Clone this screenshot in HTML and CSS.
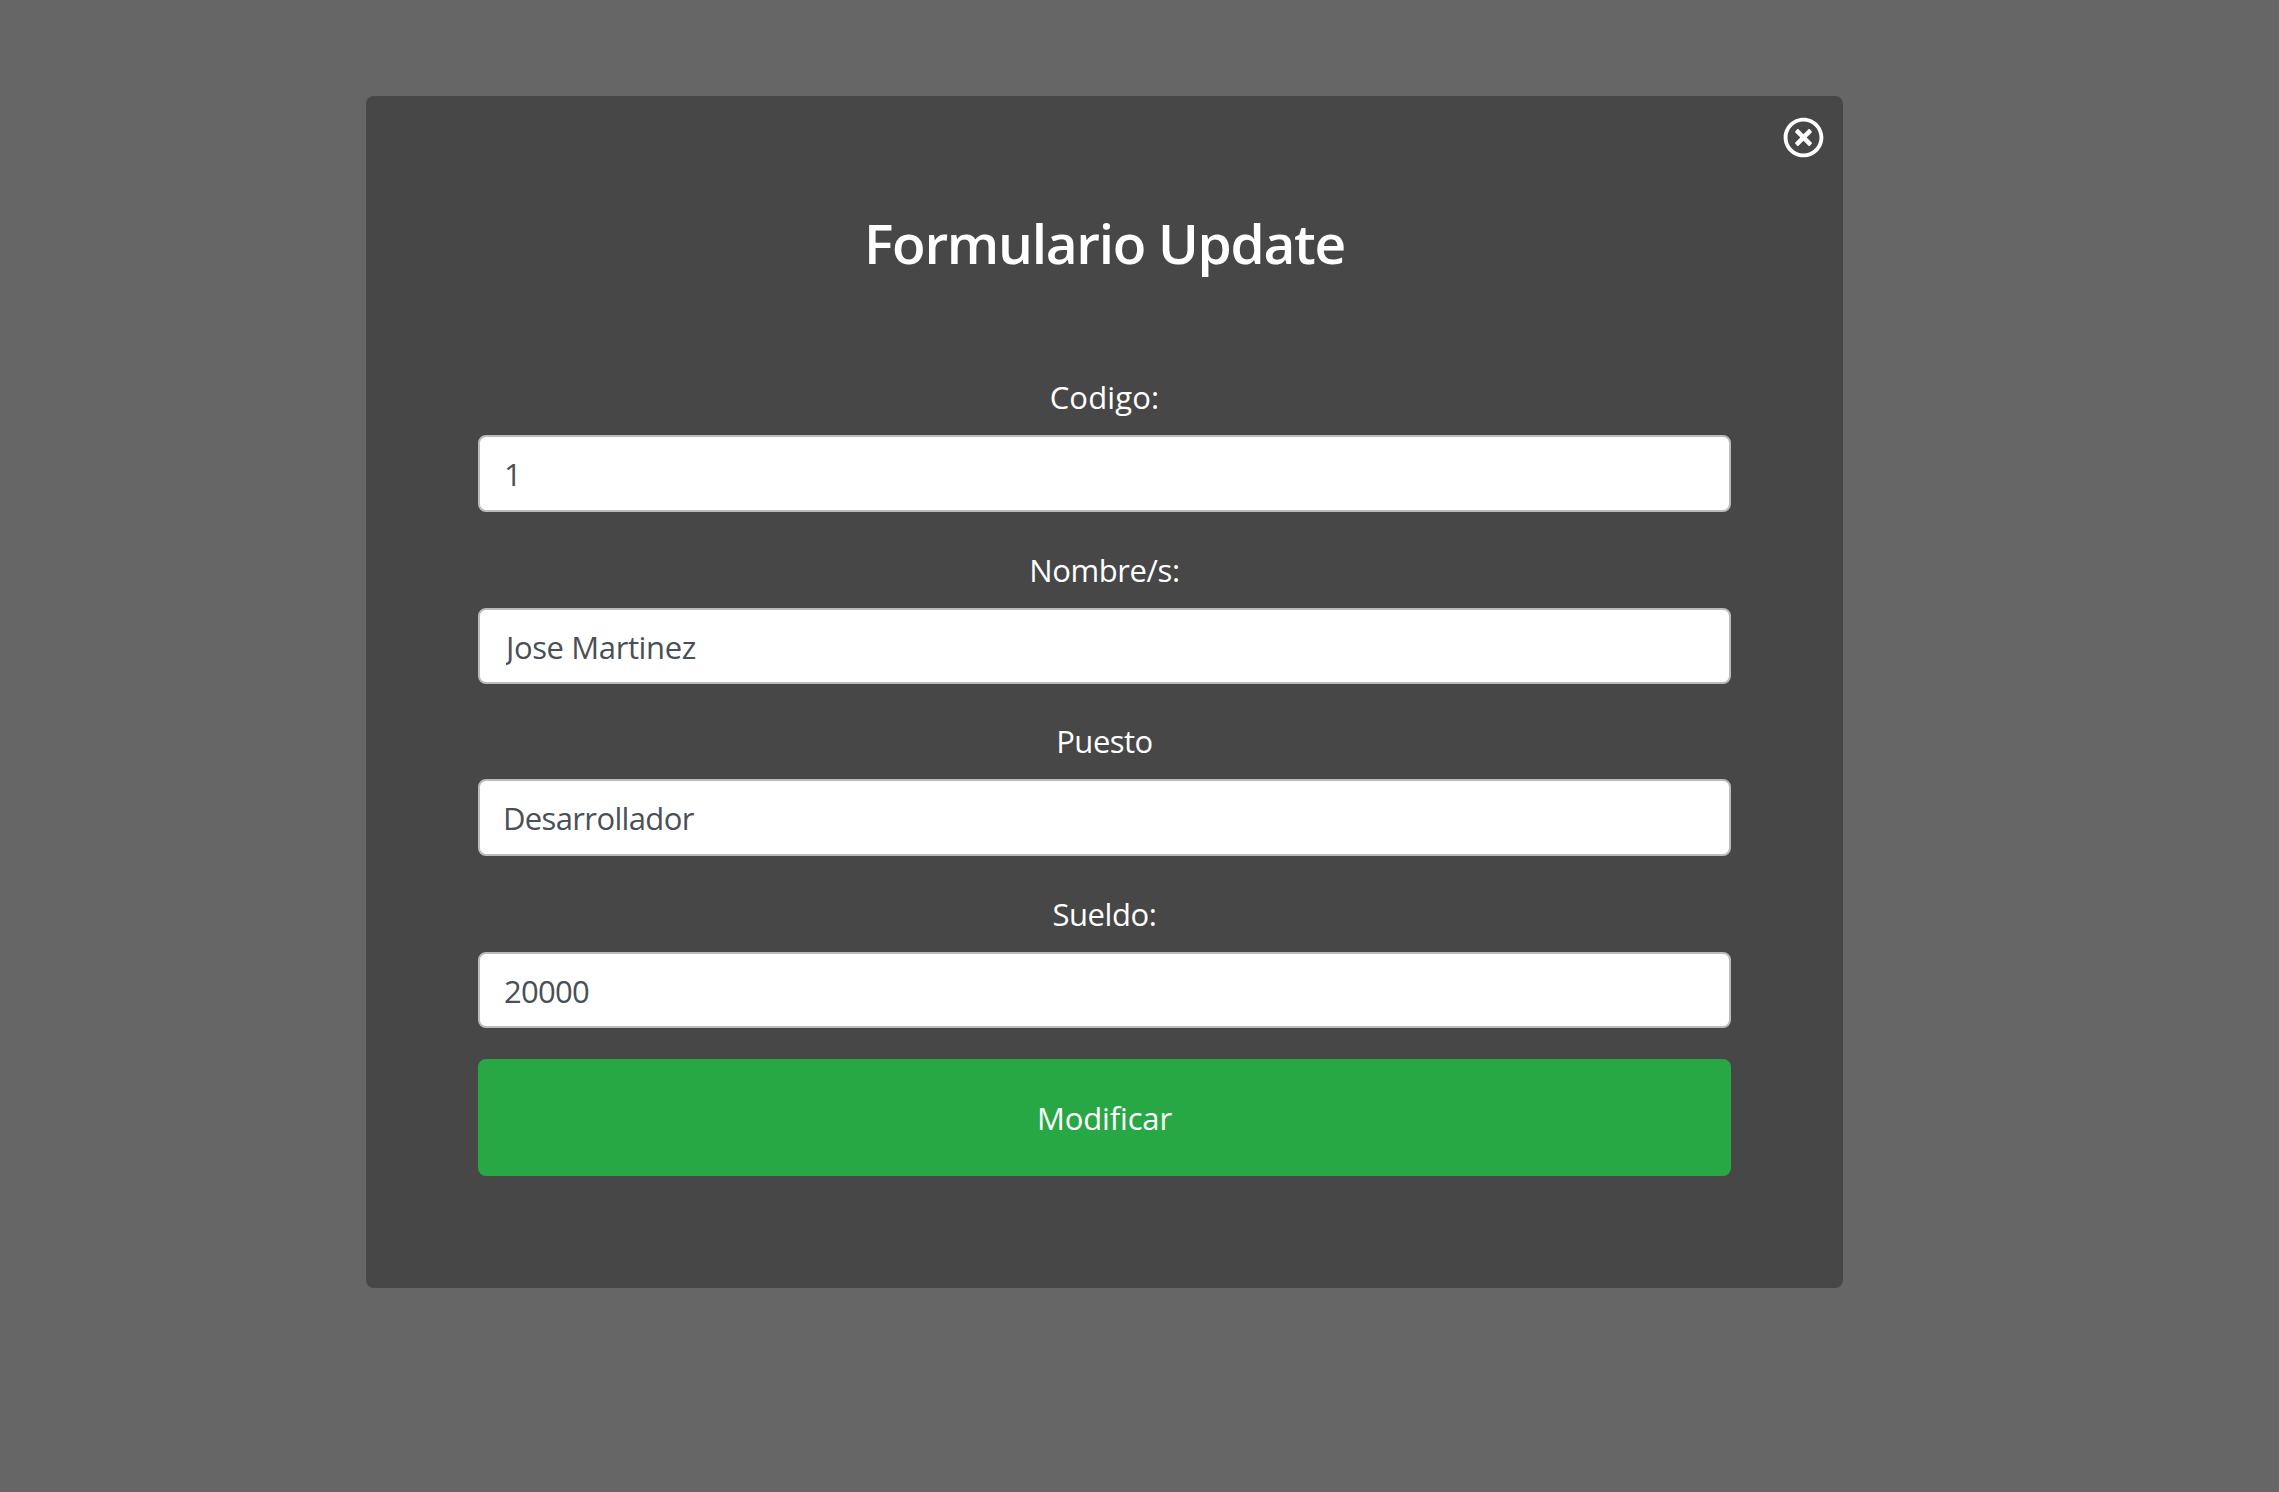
FILE: index.html
```html
<!DOCTYPE html>
<html lang="es">
<head>
<meta charset="utf-8">
<title>Formulario Update</title>
<link rel="stylesheet" href="styles.css">
</head>
<body>
<main class="modal">
  <header class="modal-top">
    <button class="close" type="button" aria-label="Cerrar">
      <svg viewBox="0 0 512 512" width="41" height="41"><path fill="currentColor" d="M256 8C119 8 8 119 8 256s111 248 248 248 248-111 248-248S393 8 256 8zm0 448c-110.500 0-200-89.500-200-200S145.500 56 256 56s200 89.500 200 200-89.500 200-200 200zm101.800-262.200L295.600 256l62.200 62.200c4.700 4.700 4.700 12.300 0 17l-22.600 22.600c-4.700 4.700-12.300 4.700-17 0L256 295.600l-62.200 62.200c-4.700 4.700-12.300 4.700-17 0l-22.600-22.600c-4.700-4.700-4.700-12.300 0-17l62.200-62.200-62.200-62.200c-4.700-4.700-4.700-12.300 0-17l22.600-22.600c4.700-4.700 12.300-4.700 17 0l62.200 62.200 62.200-62.200c4.700-4.700 12.300-4.700 17 0l22.600 22.600c4.700 4.700 4.700 12.300 0 17z"/></svg>
    </button>
  </header>
  <h1 class="title">Formulario Update</h1>
  <form class="form">
    <div class="field"><label class="label label-codigo" for="codigo">Codigo:</label><input class="input input-codigo" id="codigo" type="text" value="1"></div>
    <div class="field"><label class="label label-nombre" for="nombre">Nombre/s:</label><input class="input input-nombre" id="nombre" type="text" value="Jose Martinez"></div>
    <div class="field"><label class="label label-puesto" for="puesto">Puesto</label><input class="input input-puesto" id="puesto" type="text" value="Desarrollador"></div>
    <div class="field"><label class="label label-sueldo" for="sueldo">Sueldo:</label><input class="input input-sueldo" id="sueldo" type="text" value="20000"></div>
    <button class="submit" type="button">Modificar</button>
  </form>
</main>
</body>
</html>
```
FILE: styles.css
```css
* { box-sizing: border-box; }

body {
  margin: 0;
  min-height: 1492px;
  padding-top: 96px;
  background: #666;
  color: #fff;
  font-family: "Open Sans", "Noto Sans", sans-serif;
  font-size: 31px;
}

.modal {
  width: 1477px;
  height: 1192px;
  margin-left: 366px;
  border-radius: 8px;
  background: #474747;
}

.modal-top {
  display: flex;
  justify-content: flex-end;
  height: 64px;
  padding: 21px 19px 0 0;
}

.close {
  width: 41px;
  height: 41px;
  padding: 0;
  border: 0;
  background: none;
  color: #fff;
}

.close svg { display: block; }

.title {
  height: 124px;
  margin: 0;
  padding-top: 43px;
  text-align: center;
  font-size: 55px;
  font-weight: 600;
  line-height: 80px;
  letter-spacing: -1.3px;
}

.form {
  display: grid;
  grid-template-rows: 173px 171px 173px 174px 117px;
  margin: 0 112px;
  padding-top: 84px;
}

.label {
  display: block;
  height: 67px;
  padding-top: 5px;
  line-height: 48px;
  text-align: center;
}

.label-codigo { letter-spacing: 0.15px; }
.label-nombre { letter-spacing: -0.4px; }
.label-puesto { letter-spacing: -0.5px; }
.label-sueldo { letter-spacing: -0.4px; }

.input {
  display: block;
  width: 100%;
  height: 77px;
  margin: 0;
  padding: 1px 24px 0;
  border: 2px solid #b9bdc1;
  border-radius: 8px;
  background: #fff;
  color: #495057;
  font: inherit;
}

.input-nombre { height: 76px; padding: 2px 24px 0 26px; letter-spacing: -0.38px; }
.input-puesto { padding-left: 23px; letter-spacing: -0.64px; }
.input-sueldo { height: 76px; padding-top: 2px; letter-spacing: -0.7px; }

.submit {
  margin: 0;
  padding: 1px 0 0;
  border: 0;
  border-radius: 8px;
  background: #28a745;
  color: #fff;
  font: inherit;
  letter-spacing: -0.17px;
}
```
